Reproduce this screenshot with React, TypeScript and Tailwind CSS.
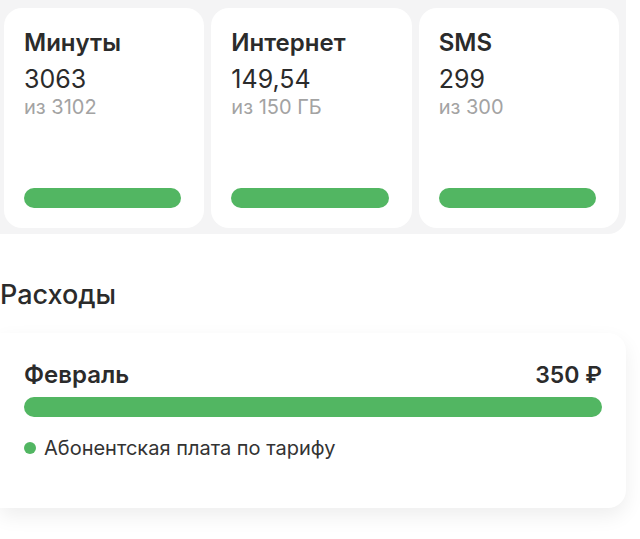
const counters = [
  { title: 'Минуты', value: '3063', total: 'из 3102' },
  { title: 'Интернет', value: '149,54', total: 'из 150 ГБ' },
  { title: 'SMS', value: '299', total: 'из 300' },
];

function CounterCard({ title, value, total }: { title: string; value: string; total: string }) {
  return (
    <div className="flex h-[220px] flex-col rounded-[18px] bg-white pt-[18px] pr-[23px] pb-5 pl-5">
      <p className="text-[24px] font-semibold leading-[34px] text-[#2b2b2b]">{title}</p>
      <p className="mt-[4px] text-[25px] leading-[30px] text-[#2b2b2b]">{value}</p>
      <p className="mt-[2px] text-[20px] leading-[22px] text-[#a3a3a3]">{total}</p>
      <div className="mt-auto h-5 w-full rounded-full bg-[#52b662]" />
    </div>
  );
}

export default function App() {
  return (
    <div className="h-[539px] w-[640px] overflow-hidden bg-white font-['Inter',sans-serif]">
      {/* Остатки */}
      <div className="w-[626px] rounded-br-[18px] bg-[#f4f4f5] pt-2 pr-[7px] pb-[6px] pl-1">
        <div className="grid grid-cols-3 gap-[7px]">
          {counters.map((c) => (
            <CounterCard key={c.title} {...c} />
          ))}
        </div>
      </div>

      {/* Расходы */}
      <h2 className="mt-[44px] text-[27px] leading-[34px] font-medium text-[#2b2b2b]">Расходы</h2>

      <div className="mt-[21px] w-[626px] rounded-r-[18px] bg-white px-6 pt-[27px] pb-[48px] shadow-[0_8px_20px_rgba(0,0,0,0.07)]">
        <div className="flex items-center justify-between">
          <p className="text-[24px] font-semibold leading-[30px] text-[#2b2b2b]">Февраль</p>
          <p className="text-[23px] font-semibold leading-[30px] text-[#2b2b2b]">350 ₽</p>
        </div>
        <div className="mt-[7px] h-5 w-full rounded-full bg-[#52b662]" />
        <div className="mt-[19px] flex items-center gap-2">
          <span className="h-3 w-3 rounded-full bg-[#52b662]" />
          <span className="text-[20px] leading-[24px] text-[#333333]">Абонентская плата по тарифу</span>
        </div>
      </div>
    </div>
  );
}
